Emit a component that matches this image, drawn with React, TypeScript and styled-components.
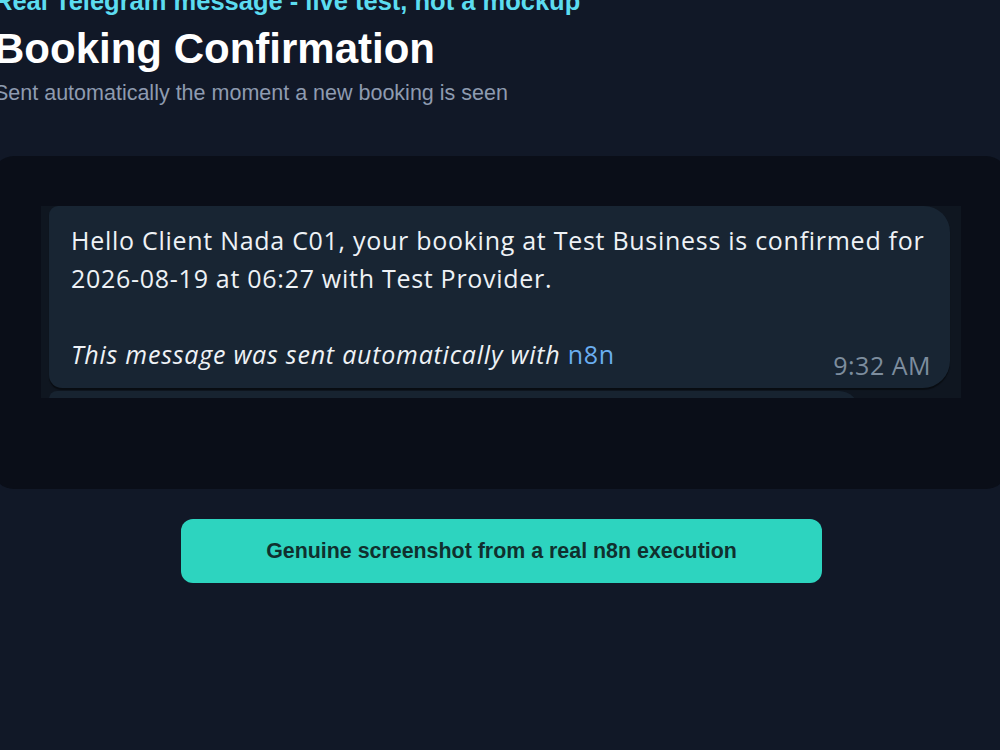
import React from "react";
import styled, { createGlobalStyle } from "styled-components";

const Global = createGlobalStyle`
  html, body { margin: 0; padding: 0; background: #111827; }
  body { font-family: "Liberation Sans", Arial, sans-serif; overflow: hidden; }
`;

const Page = styled.main`
  width: 1016px;
  margin: -14px 0 0 -8px;
  display: flex;
  flex-direction: column;
`;

const Header = styled.header`
  display: flex;
  flex-direction: column;
  padding-left: 2px;
`;

const Eyebrow = styled.div`
  font-size: 25.5px;
  line-height: 30px;
  font-weight: 700;
  color: #5cdcf0;
  white-space: nowrap;
`;

const Title = styled.h1`
  margin: 8px 0 0;
  font-size: 42px;
  line-height: 50px;
  font-weight: 700;
  color: #ffffff;
`;

const Subtitle = styled.p`
  margin: 6px 0 0;
  font-size: 21.5px;
  line-height: 26px;
  color: #8e9bb0;
`;

const Card = styled.section`
  margin-top: 50px;
  height: 333px;
  box-sizing: border-box;
  padding: 50px 47px 0 49px;
  background: #0a0e18;
  border-radius: 22px;
`;

const Shot = styled.div`
  width: 920px;
  height: 192px;
  box-sizing: border-box;
  padding: 0 11px 0 8px;
  background: #0f1620;
  overflow: hidden;
  display: flex;
  flex-direction: column;
  gap: 3px;
`;

const Bubble = styled.div`
  flex-shrink: 0;
  background: #182533;
  border-radius: 9px 26px 27px 13px;
  padding: 15px 19px 10px 22px;
  box-shadow: 0 2px 1px rgba(0, 0, 0, 0.45);
  font-family: "Open Sans", "Noto Sans", sans-serif;
  color: #eef2f6;
`;

const Body = styled.p`
  margin: 0 0 38px;
  font-size: 25px;
  line-height: 38px;
  letter-spacing: 0.72px;
  white-space: nowrap;
`;

const Footer = styled.div`
  display: flex;
  justify-content: space-between;
  align-items: flex-end;
`;

const Signature = styled.p`
  margin: 0 0 5px;
  font-size: 25px;
  line-height: 38px;
  font-style: italic;
  letter-spacing: 0.78px;
  white-space: nowrap;
`;

const Link = styled.span`
  font-style: normal;
  color: #6aaef0;
  letter-spacing: 0.7px;
`;

const Time = styled.span`
  font-size: 25px;
  line-height: 26px;
  letter-spacing: 0.5px;
  color: #7d8d9e;
`;

const NextBubble = styled.div`
  flex-shrink: 0;
  width: 810px;
  height: 20px;
  background: #172330;
  border-radius: 12px 30px 0 0;
`;

const ButtonRow = styled.div`
  display: flex;
  justify-content: center;
  padding-left: 3px;
  margin-top: 30px;
`;

const Badge = styled.div`
  width: 641px;
  height: 64px;
  border-radius: 12px;
  background: #2dd4bf;
  color: #10302e;
  font-size: 21.4px;
  font-weight: 700;
  display: flex;
  align-items: center;
  justify-content: center;
`;

export default function App() {
  return (
    <>
      <Global />
      <Page>
        <Header>
          <Eyebrow>Real Telegram message - live test, not a mockup</Eyebrow>
          <Title>Booking Confirmation</Title>
          <Subtitle>Sent automatically the moment a new booking is seen</Subtitle>
        </Header>
        <Card>
          <Shot>
            <Bubble>
              <Body>
                Hello Client Nada C01, your booking at Test Business is confirmed for
                <br />
                2026-08-19 at 06:27 with Test Provider.
              </Body>
              <Footer>
                <Signature>
                  This message was sent automatically with <Link>n8n</Link>
                </Signature>
                <Time>9:32 AM</Time>
              </Footer>
            </Bubble>
            <NextBubble />
          </Shot>
        </Card>
        <ButtonRow>
          <Badge>Genuine screenshot from a real n8n execution</Badge>
        </ButtonRow>
      </Page>
    </>
  );
}
